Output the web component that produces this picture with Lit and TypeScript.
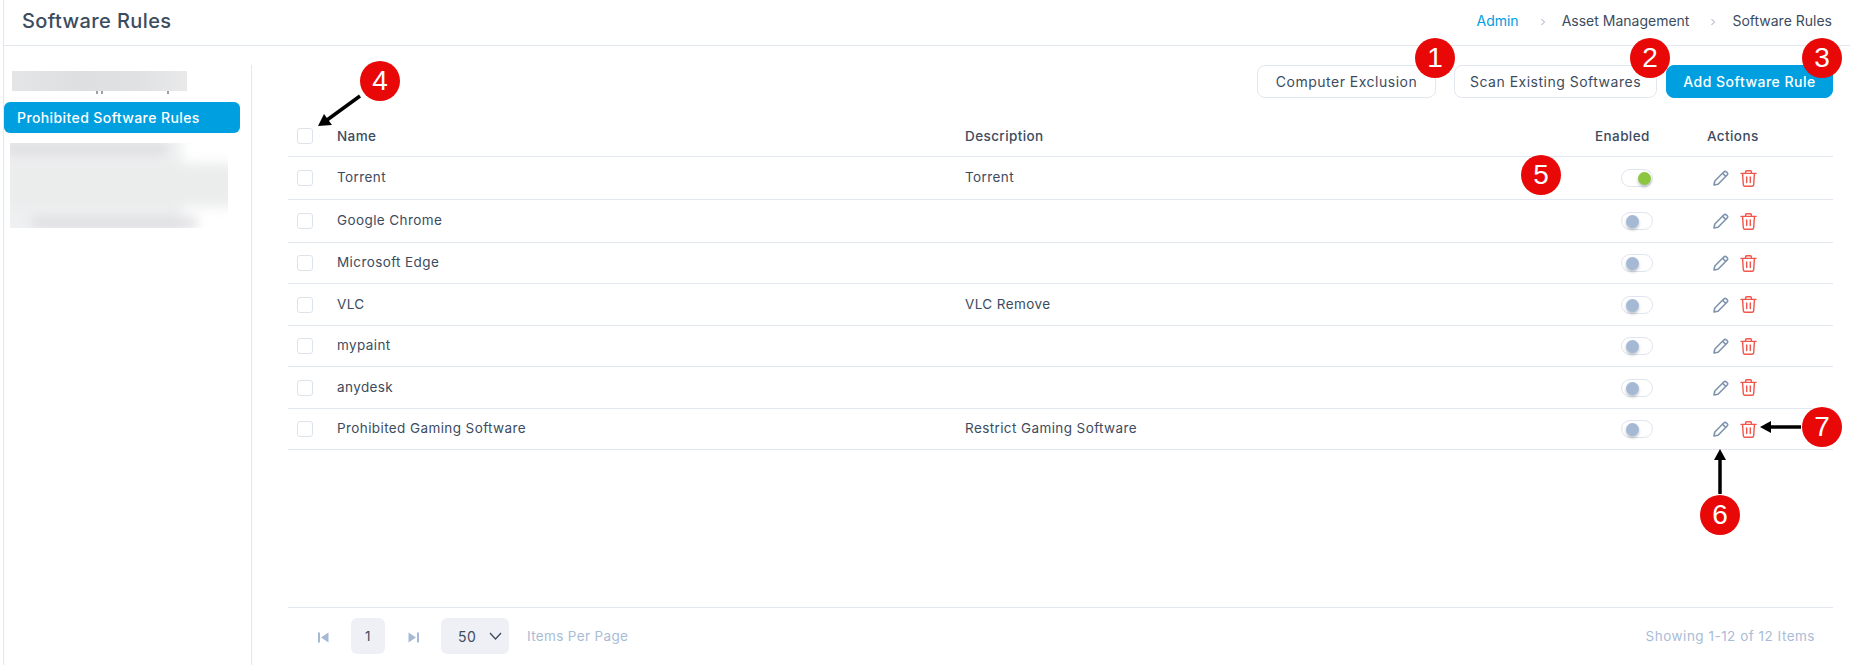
import { LitElement, html, css, svg } from 'lit';
import { customElement, property } from 'lit/decorators.js';

const RULES = [
  { name: 'Torrent', description: 'Torrent', enabled: true, height: 43 },
  { name: 'Google Chrome', description: '', enabled: false, height: 43 },
  { name: 'Microsoft Edge', description: '', enabled: false, height: 41 },
  { name: 'VLC', description: 'VLC Remove', enabled: false, height: 42 },
  { name: 'mypaint', description: '', enabled: false, height: 41 },
  { name: 'anydesk', description: '', enabled: false, height: 42 },
  { name: 'Prohibited Gaming Software', description: 'Restrict Gaming Software', enabled: false, height: 41 }
];

// Red callouts that sit over the screen, with their pointer arrows
const CALLOUTS = [
  { n: 1, x: 1435, y: 58 },
  { n: 2, x: 1650, y: 58 },
  { n: 3, x: 1822, y: 58 },
  { n: 4, x: 380, y: 81 },
  { n: 5, x: 1541, y: 175 },
  { n: 6, x: 1720, y: 515 },
  { n: 7, x: 1822, y: 427 }
];

const pencilIcon = svg`
  <svg class="icon" width="16" height="16" viewBox="0 0 16 16" fill="none" stroke="#7f93ad" stroke-width="1.6" stroke-linejoin="round">
    <path d="M1 15 L1.8 11 L11 1.8 Q12.2 0.8 13.3 1.8 L14.2 2.7 Q15.2 3.8 14.2 5 L5 14.2 Z" />
    <path d="M9.6 3.2 L12.8 6.4" />
  </svg>`;

const trashIcon = svg`
  <svg class="icon" width="17" height="17" viewBox="0 0 17 17" fill="none" stroke="#f2564c" stroke-width="1.4" stroke-linecap="round" stroke-linejoin="round">
    <path d="M1 3.4 H16" />
    <path d="M5.6 3.2 V1.9 Q5.6 0.8 6.7 0.8 H10.3 Q11.4 0.8 11.4 1.9 V3.2" />
    <path d="M2.6 3.6 L3.3 14.6 Q3.4 16.2 5 16.2 H12 Q13.6 16.2 13.7 14.6 L14.4 3.6" />
    <path d="M6.7 7 V12.6 M10.3 7 V12.6" />
  </svg>`;

const crumbSep = svg`
  <svg class="crumb-sep" width="6" height="8" viewBox="0 0 6 8" fill="none" stroke="#9aa8ba" stroke-width="1"><path d="M1.5 1 L4.5 4 L1.5 7" /></svg>`;

@customElement('app-root')
export class AppRoot extends LitElement {
  @property({ type: Array }) rules = RULES;

  static styles = css`
    :host {
      display: block;
      position: relative;
      width: 1850px;
      height: 665px;
      overflow: hidden;
      background: #fff;
      font-family: Inter, 'Liberation Sans', sans-serif;
      font-size: 13.5px;
      color: #3c4c60;
    }

    .page {
      display: flex;
      flex-direction: column;
      height: 665px;
      margin-left: 3px;
      border-left: 1px solid #e3e7ef;
      box-sizing: border-box;
    }

    .page-header {
      display: flex;
      align-items: center;
      justify-content: space-between;
      flex: none;
      height: 41px;
      padding: 0 18px 4px 18px;
      border-bottom: 1px solid #e3e7ef;
    }

    .title {
      font-size: 20px;
      font-weight: 500;
      letter-spacing: 0.4px;
      color: #3c4c60;
    }

    .crumbs {
      display: flex;
      align-items: center;
      font-size: 14px;
    }

    .crumbs a { color: #009ddf; }

    .crumb-sep {
      margin: 3px 16px 0 21px;
      display: block;
    }

    .body {
      display: flex;
      flex: 1;
      min-height: 0;
      padding-top: 19px;
    }

    .side {
      width: 247px;
      flex: none;
      border-right: 1px solid #e3e7ef;
    }

    .side-inner { width: 236px; }

    .blur-top {
      position: relative;
      overflow: hidden;
      margin: 6px 0 0 8px;
      width: 175px;
      height: 25px;
    }

    .blur-top-fill {
      height: 20px;
      background: linear-gradient(90deg, #e4e5e7, #dedfe1 40%, #e0e1e3 70%, #e9e9ea);
    }

    .blur-trace {
      position: absolute;
      top: 20px;
      height: 3px;
      width: 2px;
      background: #9aa0a8;
    }

    .trace-a { left: 84px; }
    .trace-b { left: 89px; }
    .trace-c { left: 155px; }

    .side-item {
      display: flex;
      align-items: center;
      height: 31px;
      margin-top: 6px;
      padding: 0 0 1px 13px;
      background: #009fdf;
      border-radius: 6px;
      color: #fff;
      font-size: 14px;
      font-weight: 500;
      letter-spacing: 0.4px;
      box-sizing: border-box;
    }

    .blur-block {
      position: relative;
      overflow: hidden;
      margin: 10px 0 0 6px;
      width: 218px;
      height: 85px;
      background: #fff;
    }

    .blur-block::before {
      content: '';
      position: absolute;
      inset: -8px;
      filter: blur(6px);
      background:
        linear-gradient(#dfdfe2, #dfdfe2) 0 6px / 165px 14px no-repeat,
        linear-gradient(#dfdfe2, #dfdfe2) 30px 82px / 165px 12px no-repeat,
        linear-gradient(#ebecec, #ebecec) 0 28px / 240px 44px no-repeat,
        linear-gradient(#eeeff0, #eeeff0) 0 0 / 180px 100% no-repeat;
    }

    .main {
      flex: 1;
      min-width: 0;
      display: flex;
      flex-direction: column;
      padding: 0 17px 0 36px;
    }

    .toolbar {
      display: flex;
      justify-content: flex-end;
      height: 33px;
      flex: none;
    }

    .btn {
      display: flex;
      align-items: center;
      justify-content: center;
      height: 33px;
      box-sizing: border-box;
      border: 1px solid #e3e7ef;
      border-radius: 8px;
      background: #fff;
      font-size: 14px;
      letter-spacing: 0.5px;
      color: #3c4c60;
    }

    .btn-exclude { width: 179px; margin-right: 18px; }
    .btn-scan { width: 203px; margin-right: 9px; }
    .btn-add { width: 167px; background: #009fdf; border-color: #009fdf; color: #fff; font-weight: 500; }

    .row {
      display: grid;
      grid-template-columns: 9px 16px 24px 628px 630px 112px 1fr;
      align-items: center;
      border-bottom: 1px solid #e3e7ef;
      box-sizing: border-box;
      letter-spacing: 0.4px;
    }

    .row-head {
      height: 59px;
      padding-top: 18px;
      font-weight: 500;
    }

    .check {
      grid-column: 2;
      width: 16px;
      height: 16px;
      box-sizing: border-box;
      border: 1px solid #dde3ec;
      border-radius: 3px;
      background: #fff;
    }

    .name { grid-column: 4; margin-bottom: 2px; }
    .desc { grid-column: 5; margin-bottom: 2px; }
    .row-head .name,
    .row-head .desc { margin-bottom: 0; }
    .enabled { grid-column: 6; }
    .actions { grid-column: 7; display: flex; align-items: center; padding-left: 6px; }
    .row-head .actions { padding-left: 0; }
    .actions .icon { display: block; }
    .actions .icon + .icon { margin-left: 11px; }

    .toggle {
      position: relative;
      width: 32px;
      height: 18px;
      margin-left: 26px;
      box-sizing: border-box;
      border: 1px solid #dfe5ee;
      border-radius: 9px;
      background: #fff;
    }

    .knob {
      position: absolute;
      top: 2px;
      left: 4px;
      width: 13px;
      height: 13px;
      border-radius: 50%;
      background: #a5b9d5;
      box-shadow: 0 2px 3px rgba(90, 100, 120, 0.4);
    }

    .toggle.on .knob { left: 16px; background: #8cc63f; }

    .spacer { flex: 1; }

    .pager {
      display: flex;
      align-items: center;
      flex: none;
      height: 58px;
      border-top: 1px solid #e3e7ef;
      padding: 0 18px 1px 30px;
      box-sizing: border-box;
      font-size: 13.5px;
      letter-spacing: 0.5px;
      color: #a9bcd6;
    }

    .pager > svg { display: block; flex: none; margin-top: 2px; }

    .page-no,
    .per-page {
      display: flex;
      align-items: center;
      height: 36px;
      border-radius: 6px;
      background: #eef0f5;
      color: #3c4c60;
      box-sizing: border-box;
    }

    .page-no { width: 34px; justify-content: center; margin: 0 23px 0 22px; }
    .per-page { width: 68px; padding-left: 17px; margin-left: 22px; margin-right: 18px; font-size: 14px; }
    .per-page svg { margin-left: 13px; }
    .items-label { letter-spacing: 0.35px; }
    .showing { margin-left: auto; }

    .callout {
      position: absolute;
      width: 40px;
      height: 40px;
      margin: -20px 0 0 -20px;
      display: flex;
      align-items: center;
      justify-content: center;
      border-radius: 50%;
      background: #e80808;
      color: #fff;
      font-family: 'Liberation Sans', Arial, sans-serif;
      font-size: 28px;
    }

    .arrows {
      position: absolute;
      left: 0;
      top: 0;
      pointer-events: none;
    }
  `;

  private renderRow(rule: (typeof RULES)[number]) {
    return html`
      <div class="row" style="height:${rule.height}px">
        <span class="check"></span>
        <span class="name">${rule.name}</span>
        <span class="desc">${rule.description}</span>
        <span class="enabled">
          <div class="toggle ${rule.enabled ? 'on' : ''}"><span class="knob"></span></div>
        </span>
        <span class="actions">${pencilIcon}${trashIcon}</span>
      </div>
    `;
  }

  render() {
    return html`
      <div class="page">
        <header class="page-header">
          <div class="title">Software Rules</div>
          <nav class="crumbs">
            <a>Admin</a>
            ${crumbSep}
            <span>Asset Management</span>
            ${crumbSep}
            <span>Software Rules</span>
          </nav>
        </header>
        <div class="body">
          <aside class="side">
            <div class="side-inner">
              <div class="blur-top">
                <div class="blur-top-fill"></div>
                <span class="blur-trace trace-a"></span>
                <span class="blur-trace trace-b"></span>
                <span class="blur-trace trace-c"></span>
              </div>
              <div class="side-item">Prohibited Software Rules</div>
              <div class="blur-block"></div>
            </div>
          </aside>
          <main class="main">
            <div class="toolbar">
              <div class="btn btn-exclude">Computer Exclusion</div>
              <div class="btn btn-scan">Scan Existing Softwares</div>
              <div class="btn btn-add">Add Software Rule</div>
            </div>
            <div class="row row-head">
              <span class="check"></span>
              <span class="name">Name</span>
              <span class="desc">Description</span>
              <span class="enabled">Enabled</span>
              <span class="actions">Actions</span>
            </div>
            ${this.rules.map(r => this.renderRow(r))}
            <div class="spacer"></div>
            <footer class="pager">
              <svg width="11" height="11" viewBox="0 0 11 11" fill="#a5b9d5"><rect x="0" y="0.5" width="2" height="10" /><path d="M10.5 0.5 V10.5 L3 5.5 Z" /></svg>
              <span class="page-no">1</span>
              <svg width="11" height="11" viewBox="0 0 11 11" fill="#a5b9d5"><rect x="9" y="0.5" width="2" height="10" /><path d="M0.5 0.5 V10.5 L8 5.5 Z" /></svg>
              <span class="per-page">50
                <svg width="13" height="8" viewBox="0 0 13 8" fill="none" stroke="#3c4c60" stroke-width="1.3"><path d="M1 1 L6.5 7 L12 1" /></svg>
              </span>
              <span class="items-label">Items Per Page</span>
              <span class="showing">Showing 1-12 of 12 Items</span>
            </footer>
          </main>
        </div>
      </div>

      <svg class="arrows" width="1850" height="665" viewBox="0 0 1850 665" fill="#000" stroke="none">
        <path d="M360 96 L327 120" stroke="#000" stroke-width="3.5" />
        <path d="M318 126 L324 114 L332 125 Z" />
        <path d="M1720 494 V460" stroke="#000" stroke-width="3.5" />
        <path d="M1720 449 L1726 460 H1714 Z" />
        <path d="M1801 427 H1771" stroke="#000" stroke-width="3.5" />
        <path d="M1760 427 L1771 421 V433 Z" />
      </svg>
      ${CALLOUTS.map(c => html`<div class="callout" style="left:${c.x}px;top:${c.y}px">${c.n}</div>`)}
    `;
  }
}

declare global {
  interface HTMLElementTagNameMap {
    'app-root': AppRoot;
  }
}
